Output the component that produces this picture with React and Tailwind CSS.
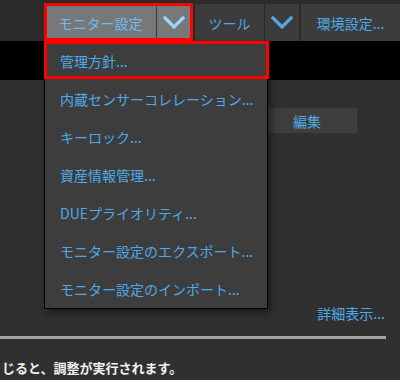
const MENU_ITEMS = [
  '管理方針...',
  '内蔵センサーコレレーション...',
  'キーロック...',
  '資産情報管理...',
  'DUEプライオリティ...',
  'モニター設定のエクスポート...',
  'モニター設定のインポート...',
];

const Chevron = ({ color }) => (
  <svg width="22" height="13" viewBox="0 0 22 13" fill="none">
    <path d="M2 2 L11 11 L20 2" stroke={color} strokeWidth="3.2" strokeLinecap="square" />
  </svg>
);

const App = () => {
  return (
    <div
      className="relative w-[400px] h-[380px] overflow-hidden bg-[#303030]"
      style={{ fontFamily: '"Noto Sans CJK JP", "Noto Sans", sans-serif' }}
    >
      {/* Toolbar */}
      <div className="flex h-[41px] pt-[4px] bg-[#2b2b2b]">
        <div className="w-[45px] shrink-0" />
        <div className="flex h-full bg-[#787878]">
          <div className="w-[112px] flex items-center justify-center text-[14px] leading-none text-[#6cbcf5] border-r border-[#3a3a3a]">
            モニター設定
          </div>
          <div className="w-[34px] flex items-center justify-center">
            <Chevron color="#9ad6fa" />
          </div>
        </div>
        <div className="w-[4px] shrink-0" />
        <div className="flex h-full bg-[#3c3c3c]">
          <div className="w-[70px] flex items-center justify-center text-[14px] leading-none text-[#4fa9e8] border-r border-[#2b2b2b]">
            ツール
          </div>
          <div className="w-[34px] flex items-center justify-center">
            <Chevron color="#4fa9e8" />
          </div>
        </div>
        <div className="w-[2px] shrink-0" />
        <div className="flex-1 h-full bg-[#3c3c3c] flex items-center justify-center text-[14px] leading-none text-[#4fa9e8]">
          環境設定...
        </div>
      </div>

      {/* Black strip */}
      <div className="h-[39px] bg-black" />

      {/* Content */}
      <div className="flex flex-col">
        <div className="h-[28px]" />
        <div className="flex">
          <div className="w-[257px] shrink-0" />
          <div className="w-[100px] h-[25px] bg-[#3e3e3e] flex items-center justify-center text-[14px] leading-none text-[#4fa9e8]">
            編集
          </div>
        </div>
        <div className="h-[173px]" />
        <div className="flex justify-end pr-[15px] text-[14px] leading-none text-[#4fa9e8]">
          詳細表示...
        </div>
        <div className="h-[16px]" />
        <div className="w-[386px] h-[3px] bg-[#a3a3a3]" />
        <div className="h-[22px]" />
        <div className="pl-[2px] text-[13px] leading-none font-bold text-[#f2f2f2]">
          じると、調整が実行されます。
        </div>
      </div>

      {/* Dropdown menu */}
      <div className="absolute left-[44px] top-[41px] w-[224px] bg-[#3d3d3d] border border-black shadow-[3px_4px_8px_rgba(0,0,0,0.45)]">
        {MENU_ITEMS.map((item) => (
          <div
            key={item}
            className="h-[38px] pl-[15px] flex items-center text-[14px] leading-none text-[#4fa9e8] whitespace-nowrap"
          >
            {item}
          </div>
        ))}
      </div>

      {/* Highlight boxes */}
      <div className="absolute left-[44px] top-[3px] w-[149px] h-[38px] border-[3px] border-[#ff0000]" />
      <div className="absolute left-[44px] top-[41px] w-[225px] h-[38px] border-[3px] border-[#ff0000]" />
    </div>
  );
};

export default App;
